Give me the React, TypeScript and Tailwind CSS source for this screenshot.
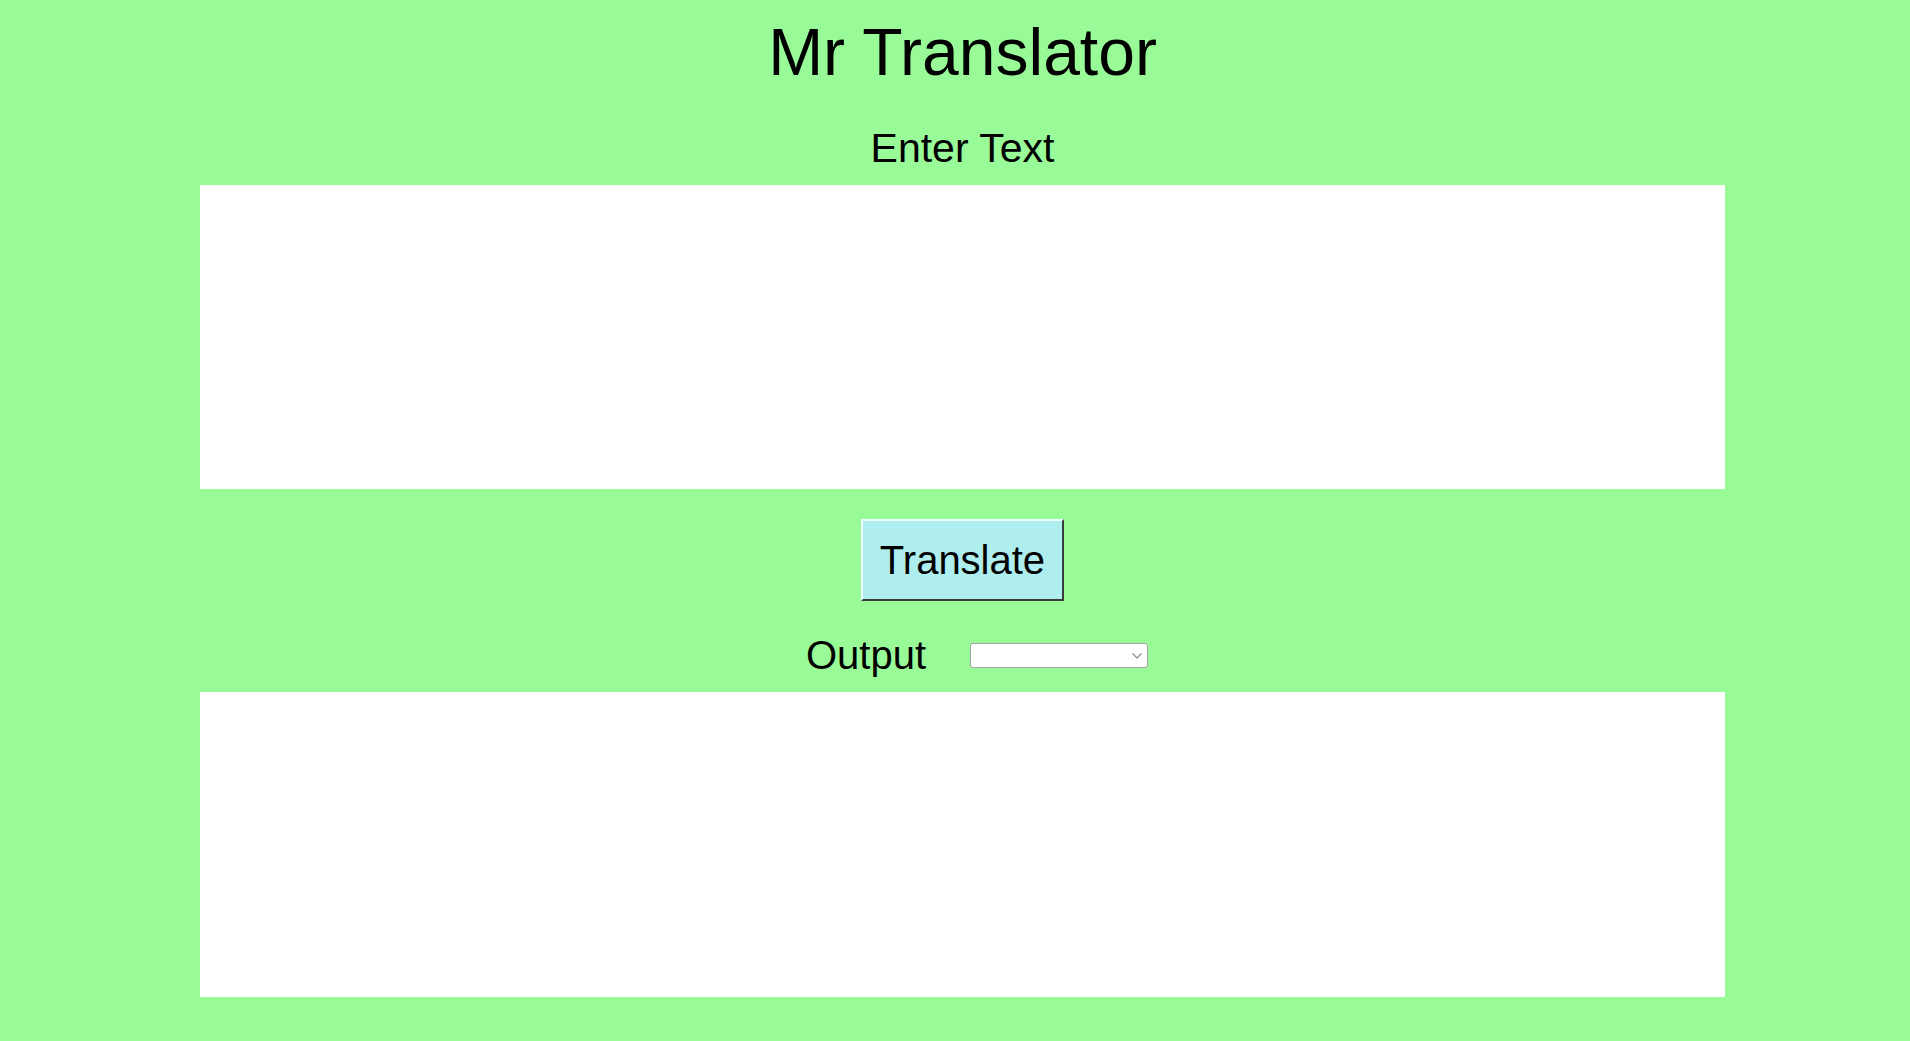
import React from "react";

export default function App() {
  return (
    <div className="min-h-[1041px] w-full bg-[#98FB98] overflow-hidden" style={{ fontFamily: '"Liberation Sans", Arial, sans-serif' }}>
      <div className="ml-[200px] w-[1525px] flex flex-col items-center text-black">
        <h1 className="mt-[12px] text-[66px] leading-[80px] font-normal">Mr Translator</h1>
        <div className="mt-[32px] text-[41px] leading-[49px]">Enter Text</div>
        <textarea className="mt-[12px] w-[1525px] h-[304px] bg-white border-0 outline-none resize-none block" />
        <button className="mt-[30px] h-[82px] px-[17px] bg-[#AFEEEE] text-[40px] leading-[46px] border-2 border-t-[#eaffff] border-l-[#eaffff] border-r-[#3a3a3a] border-b-[#3a3a3a] text-black">
          Translate
        </button>
        <div className="mt-[30px] self-start ml-[606px] flex items-start gap-[44px]">
          <div className="text-[40px] leading-[48px]">Output</div>
          <div className="relative mt-[12px] w-[178px] h-[25px]">
            <select className="appearance-none w-full h-full bg-white border border-[#a3a3a3] rounded-[3px] outline-none" />
            <svg className="absolute right-[6px] top-[10px]" width="10" height="6" viewBox="0 0 10 6" fill="none">
              <path d="M0.5 0.5 L5 5 L9.5 0.5" stroke="#8a8a8a" strokeWidth="1.2" />
            </svg>
          </div>
        </div>
        <textarea className="mt-[13px] w-[1525px] h-[305px] bg-white border-0 outline-none resize-none block" />
      </div>
    </div>
  );
}
